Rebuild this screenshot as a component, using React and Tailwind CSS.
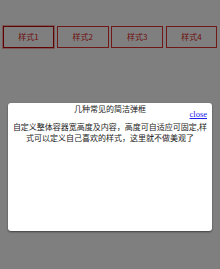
import React from "react";

export default function App() {
  const btns = ["样式1", "样式2", "样式3", "样式4"];
  return (
    <div
      className="relative w-[220px] h-[269px] bg-white overflow-hidden"
      style={{ fontFamily: '"Noto Sans CJK SC", "Liberation Sans", sans-serif' }}
    >
      <div className="flex gap-[2.7px] px-[2.7px] pt-[26px]">
        {btns.map((b, i) => (
          <div
            key={b}
            className={`w-[52px] h-[22px] flex items-center justify-center text-[8px] text-[#e02020] border ${
              i === 0 ? "border-[#c00000] outline outline-1 outline-[#e04040]/40" : "border-[#e03030]"
            }`}
          >
            {b}
          </div>
        ))}
      </div>

      <div className="absolute inset-0 bg-black/50 px-[8px] pt-[103px]">
        <div className="relative h-[128px] bg-white rounded-[3px] shadow-[0_1px_2px_rgba(0,0,0,0.5)]">
          <div className="pt-[1px] text-center text-[8px] leading-[10px] text-[#222]">
            几种常见的简洁弹框
          </div>
          <a
            className="absolute top-[6px] right-[5px] text-[8.5px] leading-[10px] text-[#2020ee] underline"
            style={{ fontFamily: '"Liberation Serif", serif' }}
          >
            close
          </a>
          <div className="mt-[7px] px-[4px] text-center text-[8px] leading-[11px] text-[#222]">
            自定义整体容器宽高度及内容，高度可自适应可固定,样式可以定义自己喜欢的样式，这里就不做美观了
          </div>
        </div>
      </div>
    </div>
  );
}
